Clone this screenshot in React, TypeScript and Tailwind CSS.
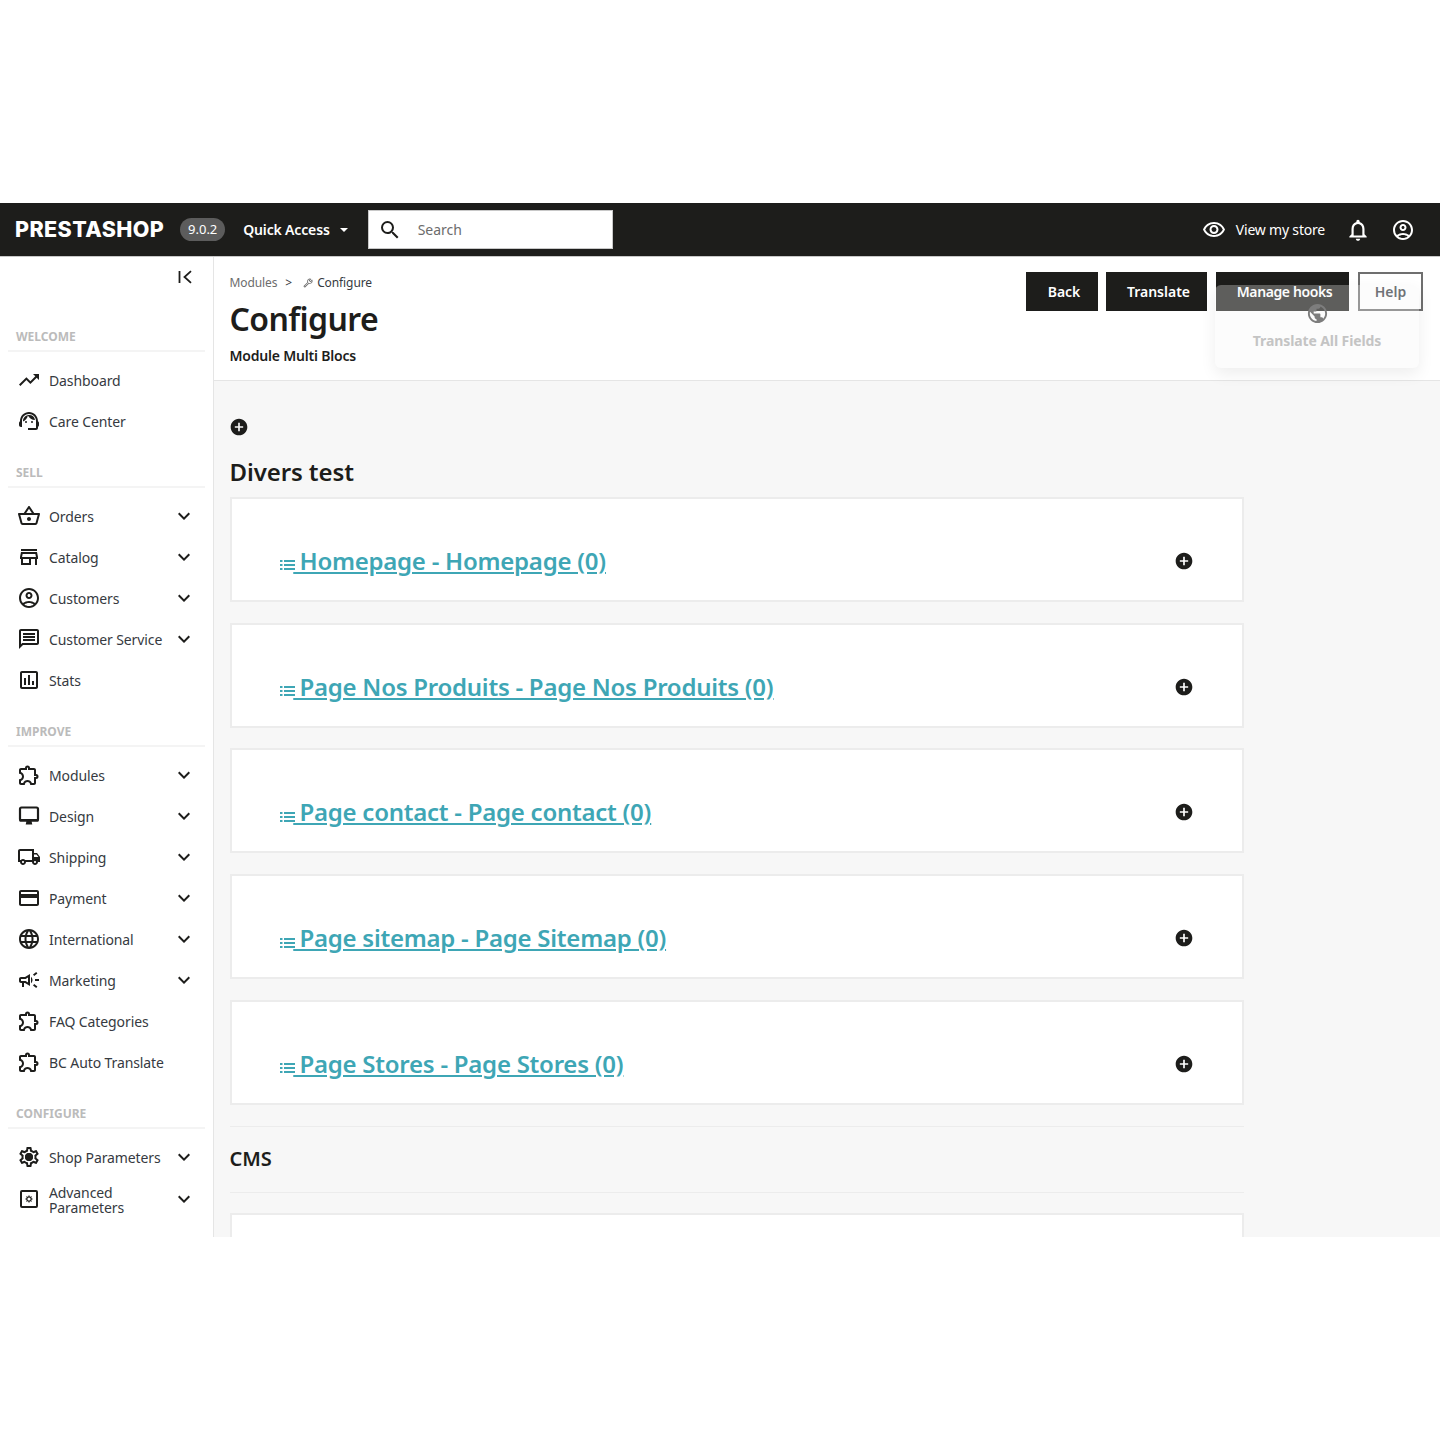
import React from "react";
import {
  MdAddCircle,
  MdExpandMore,
  MdLanguage,
  MdNotificationsNone,
  MdOutlineAccountCircle,
  MdOutlineAssessment,
  MdOutlineBuild,
  MdOutlineCampaign,
  MdOutlineExtension,
  MdOutlineLocalShipping,
  MdOutlineMessage,
  MdOutlinePayment,
  MdOutlineSettings,
  MdOutlineShoppingBasket,
  MdOutlineStore,
  MdOutlineSupportAgent,
  MdOutlineTrendingUp,
  MdOutlineVisibility,
  MdPublic,
  MdSearch,
} from "react-icons/md";

type NavItem = { label: string; icon: React.ElementType; sub?: boolean };

// gear with a solid hub, the outline one from the pack has a hollow centre
function ShopGear({ className }: { className?: string }) {
  return (
    <span className="relative shrink-0">
      <MdOutlineSettings className={className} />
      <span className="absolute left-[8px] top-[8px] h-[8px] w-[8px] rounded-full bg-[#1d1d1b]" />
    </span>
  );
}

function AdvancedGear({ className }: { className?: string }) {
  return (
    <svg viewBox="0 0 24 24" fill="none" stroke="currentColor" className={className}>
      <rect x="4" y="4" width="16" height="16" rx="1" strokeWidth="2" />
      <circle cx="12" cy="12" r="2.2" strokeWidth="1.2" />
      <path d="M12 8.4v1.4M12 14.2v1.4M8.4 12h1.4M14.2 12h1.4M9.5 9.5l1 1M13.5 13.5l1 1M14.5 9.5l-1 1M10.5 13.5l-1 1" strokeWidth="1" />
    </svg>
  );
}

function DesignIcon({ className }: { className?: string }) {
  return (
    <svg viewBox="0 0 24 24" className={className}>
      <rect x="3" y="3.5" width="18" height="13" rx="1.5" fill="none" stroke="currentColor" strokeWidth="2.2" />
      <path d="M2.5 15h19v2.5h-19zM9.5 17h5l.8 3.5H8.700z" fill="currentColor" />
    </svg>
  );
}

const nav: { title: string; items: NavItem[] }[] = [
  {
    title: "WELCOME",
    items: [
      { label: "Dashboard", icon: MdOutlineTrendingUp },
      { label: "Care Center", icon: MdOutlineSupportAgent },
    ],
  },
  {
    title: "SELL",
    items: [
      { label: "Orders", icon: MdOutlineShoppingBasket, sub: true },
      { label: "Catalog", icon: MdOutlineStore, sub: true },
      { label: "Customers", icon: MdOutlineAccountCircle, sub: true },
      { label: "Customer Service", icon: MdOutlineMessage, sub: true },
      { label: "Stats", icon: MdOutlineAssessment },
    ],
  },
  {
    title: "IMPROVE",
    items: [
      { label: "Modules", icon: MdOutlineExtension, sub: true },
      { label: "Design", icon: DesignIcon, sub: true },
      { label: "Shipping", icon: MdOutlineLocalShipping, sub: true },
      { label: "Payment", icon: MdOutlinePayment, sub: true },
      { label: "International", icon: MdLanguage, sub: true },
      { label: "Marketing", icon: MdOutlineCampaign, sub: true },
      { label: "FAQ Categories", icon: MdOutlineExtension },
      { label: "BC Auto Translate", icon: MdOutlineExtension },
    ],
  },
  {
    title: "CONFIGURE",
    items: [
      { label: "Shop Parameters", icon: ShopGear, sub: true },
      { label: "Advanced Parameters", icon: AdvancedGear, sub: true },
    ],
  },
];

const blocks = [
  "Homepage - Homepage (0)",
  "Page Nos Produits - Page Nos Produits (0)",
  "Page contact - Page contact (0)",
  "Page sitemap - Page Sitemap (0)",
  "Page Stores - Page Stores (0)",
];

function ListIcon() {
  return (
    <svg width="15" height="12" viewBox="0 0 15 12" fill="currentColor" className="-mr-px mt-[9px] shrink-0">
      <rect x="0" y="1" width="2.5" height="2" />
      <rect x="4" y="1" width="11" height="2" />
      <rect x="0" y="5" width="2.5" height="2" />
      <rect x="4" y="5" width="11" height="2" />
      <rect x="0" y="9" width="2.5" height="2" />
      <rect x="4" y="9" width="11" height="2" />
    </svg>
  );
}

function Sidebar() {
  return (
    <aside className="w-[214px] shrink-0 border-r border-[#e5e5e5] bg-white">
      <div className="flex h-[48.5px] justify-end pr-[21px] pt-[13px]">
        <svg width="14" height="14" viewBox="0 0 14 14" fill="none" stroke="#1d1d1b" strokeWidth="1.8">
          <path d="M1.5 1v12" />
          <path d="M13 1.2 6.5 7l6.5 5.8" />
        </svg>
      </div>
      {nav.map((group) => (
        <div key={group.title}>
          <div className="mx-2 mt-[24.5px] h-[22px] border-b-2 border-[#f4f4f4] pl-2 text-xs font-bold leading-[14px] text-[#bbbbbb]">
            {group.title}
          </div>
          <div className="mt-[7.5px]">
            {group.items.map((item) => (
              <div
                key={item.label}
                className={
                  item.label === "Advanced Parameters"
                    ? "flex h-[43px] items-center pl-[17px] pr-[22px]"
                    : "flex h-[41px] items-center pl-[17px] pr-[22px]"
                }
              >
                <item.icon className="h-[24px] w-[24px] shrink-0 text-[#1d1d1b]" />
                <span
                  className={
                    item.label === "Advanced Parameters"
                      ? "ml-[8px] flex-1 pt-[2px] text-sm leading-[15px] tracking-[-0.1px] text-[#363a41]"
                      : "ml-[8px] flex-1 text-sm leading-[15px] tracking-[-0.1px] text-[#363a41]"
                  }
                >
                  {item.label}
                </span>
                {item.sub && <MdExpandMore className="-mr-[5px] h-[24px] w-[24px] shrink-0 text-[#1d1d1b]" />}
              </div>
            ))}
          </div>
        </div>
      ))}
    </aside>
  );
}

function Buttons() {
  return (
    <div className="relative flex pt-[15px]">
      <button className="h-[39px] w-[72px] bg-[#1d1d1b] pl-[4px] pt-px text-sm font-semibold text-white">Back</button>
      <button className="ml-[8px] h-[39px] w-[101px] bg-[#1d1d1b] pl-[4px] pt-px text-sm font-semibold text-white">Translate</button>
      <button className="ml-[9px] h-[39px] w-[133px] bg-[#1d1d1b] pl-[4px] pt-px text-sm font-semibold tracking-[-0.4px] text-white">Manage hooks</button>
      <button className="ml-[9px] h-[39px] w-[65px] border-2 border-[#6f6f6f] bg-white pt-px text-sm font-semibold text-[#363a41]">
        Help
      </button>
      {/* floating translate panel, half faded */}
      <div className="absolute left-[189px] top-[28px] flex h-[83px] w-[204px] flex-col items-center rounded-[6px] bg-[#f5f5f5]/30 pt-[17px] shadow-[0_6px_16px_rgba(0,0,0,0.07)]">
        <MdPublic className="h-[23px] w-[23px] text-[#7d7d7d]" />
        <span className="mt-[6px] text-sm font-bold tracking-[-0.1px] text-[#c4c4c4]">Translate All Fields</span>
      </div>
    </div>
  );
}

export default function App() {
  return (
    <div className="bg-white pt-[203px] pb-[203px] font-['Noto_Sans',sans-serif]">
      <div className="flex h-[1034px] flex-col overflow-hidden bg-[#f7f7f7]">
        <header className="flex h-[54px] shrink-0 items-center border-b border-[#c8c8c8] bg-[#1d1d1b] pl-[15px] pr-[25px] text-white">
          <span className="font-['Inter',sans-serif] text-[21.5px] font-extrabold tracking-[0.4px]">PRESTASHOP</span>
          <span className="ml-[16px] flex h-[23px] w-[45px] items-center justify-center rounded-full bg-[#5c5c5c] text-[13px]">9.0.2</span>
          <span className="ml-[18px] text-sm font-semibold tracking-[-0.15px]">Quick Access</span>
          <span className="ml-[10px] h-0 w-0 border-x-[4px] border-t-[4px] border-x-transparent border-t-white" />
          <div className="ml-[20px] flex h-[39px] w-[245px] items-center border border-[#c8c8c8] bg-white pl-[9px] text-[#6c6c6c]">
            <MdSearch className="h-[24px] w-[24px] text-[#1d1d1b]" />
            <span className="ml-[16px] text-sm">Search</span>
          </div>
          <div className="ml-auto flex items-center">
            <MdOutlineVisibility className="h-[24px] w-[24px]" />
            <span className="ml-[10px] text-sm tracking-[-0.2px]">View my store</span>
            <MdNotificationsNone className="ml-[20px] h-[26px] w-[26px]" />
            <MdOutlineAccountCircle className="ml-[20px] h-[24px] w-[24px]" />
          </div>
        </header>
        <div className="flex min-h-0 flex-1">
          <Sidebar />
          <main className="min-w-0 flex-1">
            <div className="flex h-[124px] justify-between border-b border-[#e5e5e5] bg-white pl-[15.5px] pr-[17px]">
              <div>
                <div className="mt-[18px] flex items-center text-xs tracking-[-0.1px] text-[#6c6c6c]">
                  <span>Modules</span>
                  <span className="ml-[8px] text-[#363a41]">&gt;</span>
                  <MdOutlineBuild className="ml-[11px] h-[10px] w-[10px] -scale-x-100" />
                  <span className="ml-[4px] text-[#363a41]">Configure</span>
                </div>
                <h1 className="mt-[6px] text-[32px] font-semibold leading-[44px] tracking-[-0.6px] text-[#1d1d1b]">Configure</h1>
                <div className="mt-[5px] text-sm font-semibold leading-[20px] tracking-[-0.2px] text-[#1d1d1b]">Module Multi Blocs</div>
              </div>
              <Buttons />
            </div>
            <div className="w-[1029.5px] pl-[15.5px]">
              <MdAddCircle className="mt-[36px] -ml-[1px] h-[20px] w-[20px] text-[#1d1d1b]" />
              <h2 className="mt-[19px] text-[24px] font-semibold leading-[32px] tracking-[-0.1px] text-[#1d1d1b]">Divers test</h2>
              <div className="mt-[8.75px] flex flex-col gap-[20.75px]">
                {blocks.map((b) => (
                  <div
                    key={b}
                    className="flex h-[105px] items-end justify-between border-2 border-[#ececec] bg-white pb-[22px] pl-[48px] pr-[48px]"
                  >
                    <a className="flex items-center text-[24px] font-semibold leading-[34px] tracking-[-0.25px] text-[#3ea6b5] underline">
                      <ListIcon />
                      <span className="underline">{"\u00a0" + b}</span>
                    </a>
                    <MdAddCircle className="mb-[7px] h-[20px] w-[20px] text-[#1d1d1b]" />
                  </div>
                ))}
              </div>
              <div className="mt-[21px] border-t border-[#ececec] pt-[18px]">
                <h3 className="text-[20px] font-semibold leading-[28px] text-[#1d1d1b]">CMS</h3>
              </div>
              <div className="mt-[19px] border-t border-[#ececec]" />
              <div className="mt-[20px] h-[105px] border-2 border-[#ececec] bg-white" />
            </div>
          </main>
        </div>
      </div>
    </div>
  );
}
